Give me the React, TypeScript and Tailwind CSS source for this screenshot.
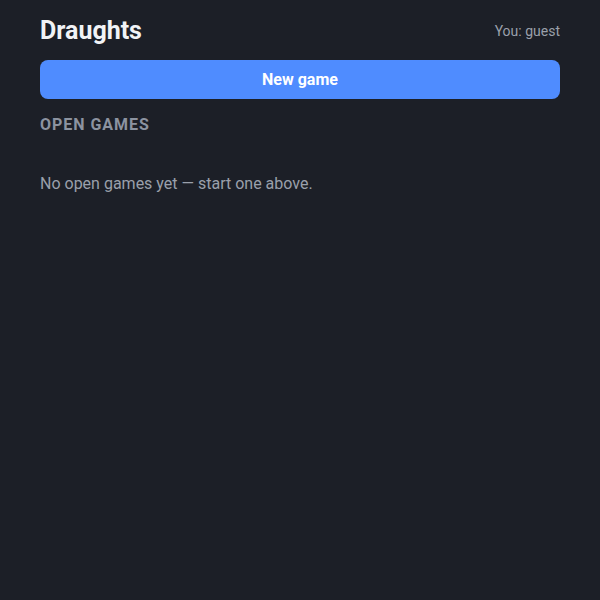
import React from 'react';

const App = () => {
  return (
    <div
      className="min-h-[600px] w-full bg-[#1c1f27] px-10 pt-[15px]"
      style={{ fontFamily: 'Roboto, "Noto Sans", sans-serif' }}
    >
      <div className="flex h-8 items-center justify-between">
        <h1 className="text-[25px] font-bold text-[#f1f3f6]">Draughts</h1>
        <span className="text-sm text-[#9aa0ab]">You: guest</span>
      </div>

      <button className="mt-[13px] h-[39px] w-full rounded-lg bg-[#4f8cff] text-base font-bold text-white">
        New game
      </button>

      <h2 className="mt-4 text-base leading-5 font-bold tracking-[0.06em] text-[#8c93a0] uppercase">
        Open games
      </h2>

      <p className="mt-[37px] text-base leading-6 text-[#9aa0ab]">
        No open games yet — start one above.
      </p>
    </div>
  );
};

export default App;
